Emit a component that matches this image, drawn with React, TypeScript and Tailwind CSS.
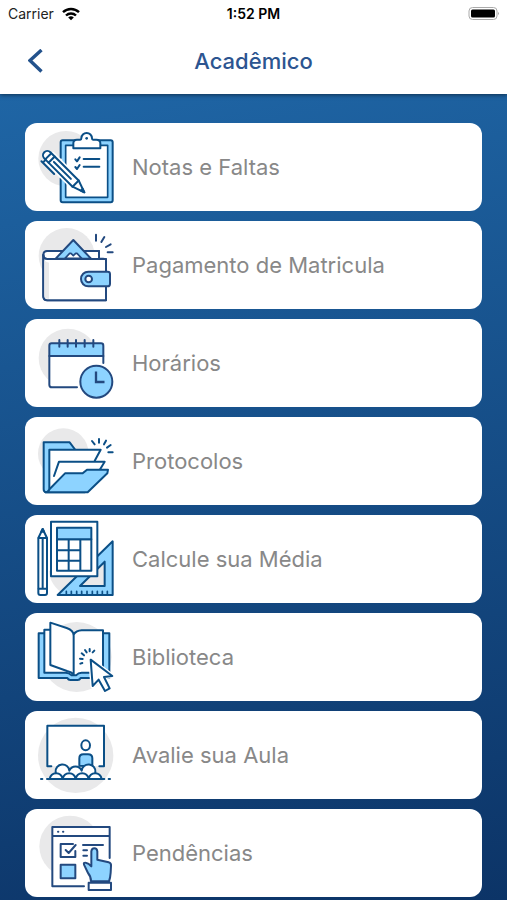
import type { ReactNode } from "react";

const SKY = "#8dd3ff";
const HALO = "#e9e9ea";

type IconProps = { top: number; color?: string; children: ReactNode };

function Illustration({ top, color = "#0b4f86", children }: IconProps) {
  return (
    <svg
      className="h-[88px] w-[92px] shrink-0"
      viewBox={`15 ${top} 276 264`}
      fill="none"
      stroke={color}
      strokeWidth={6}
      strokeLinecap="round"
      strokeLinejoin="round"
      aria-hidden="true"
    >
      {children}
    </svg>
  );
}

function GradesIcon() {
  return (
    <Illustration top={15}>
      <circle cx="138" cy="122" r="83" fill={HALO} stroke="none" />
      <rect x="122" y="67" width="156" height="186" rx="6" fill={SKY} />
      <rect x="137" y="82" width="126" height="156" fill="#fff" strokeWidth="5" />
      <path d="M160 91V76q0-11 11-11h10q3 0 3-4a16 16 0 0 1 32 0q0 4 3 4h10q12 0 12 11v15z" fill="#fff" />
      <circle cx="200" cy="61" r="4" fill="#0b4f86" stroke="none" />
      <path d="M191 123h47M191 146h47M166 124l5 6 8-12M166 147l5 6 8-12" />
      <path d="M122 122v58" stroke={HALO} strokeWidth="9" strokeLinecap="butt" />
      <g transform="translate(82 112) rotate(45)">
        <path d="M10-13h112l35 13-35 13H10z" fill="#fff" stroke="#fff" strokeWidth="16" />
        <path d="M18-13h102l37 13-37 13H18z" fill="#fff" />
        <path d="M18-13H0a13 13 0 0 0 0 26h18z" fill="#fff" />
        <path d="M4-12v24M120-13v26M28 0h72" />
        <path d="M146-4l11 4-11 4z" fill="#0b4f86" />
        <path d="M6 13v12M0 25h54" />
      </g>
    </Illustration>
  );
}

function WalletIcon() {
  return (
    <Illustration top={15} color="#23497f">
      <circle cx="140" cy="120" r="84" fill={HALO} stroke="none" />
      <path d="M70 117q0-12 12-12h155v23h12l9 2v123H82q-12 0-12-12z" fill="#fff" />
      <path d="M82 129q-12 0-12-12M82 105h155v22" />
      <path d="M107 128l53-56 53 56z" fill={SKY} />
      <path d="M135 127l14-15h4l7 7 7-7h4l14 15z" fill="#fff" strokeWidth="5" />
      <path d="M82 129h176v124H82q-12 0-12-12V117q0 12 12 12z" fill="#fff" />
      <path d="M73 133q4 6 14 7v109q-14 0-14-13z" fill={HALO} stroke="none" />
      <path d="M205 167h58q7 0 7 7v29q0 8-7 8h-58a22 22 0 0 1 0-44z" fill={SKY} />
      <circle cx="206" cy="189" r="10" fill="#fff" />
      <path d="M228 56v18M253 63l-9 15M272 85l-14 8M263 109h15" />
    </Illustration>
  );
}

function ScheduleIcon() {
  return (
    <Illustration top={14} color="#23497f">
      <circle cx="144" cy="131" r="88" fill={HALO} stroke="none" />
      <rect x="88" y="88" width="162" height="132" rx="7" fill="#fff" stroke="none" />
      <path d="M88 125V94q0-7 7-7h148q7 0 7 7v31z" fill={SKY} />
      <path d="M88 125v86q0 8 8 8h75M250 125v21" />
      <path d="M118 77v20M143 77v20M168 77v20M194 77v20M220 77v20" />
      <circle cx="229" cy="202" r="48" fill={SKY} />
      <path d="M228 175v28h22" strokeWidth="7" strokeLinecap="square" strokeLinejoin="miter" />
    </Illustration>
  );
}

function FolderIcon() {
  return (
    <Illustration top={14}>
      <circle cx="130" cy="124" r="76" fill={HALO} stroke="none" />
      <path d="M71 90h78l15 20 50 110-20 20H77q-6-2-6-9z" fill={SKY} />
      <path d="M88 228V112h154l-17 32-30 65z" fill="#fff" />
      <path d="M102 191l15-43h137l-24 47-60 30H93l11-32z" fill="#fff" stroke="none" />
      <path d="M102 191l15-43h137l-15 25" />
      <path d="M76 240q8 0 13-10l46-47h53l13-11h63l-2 11-59 57z" fill={SKY} />
      <path d="M216 86l8 10M237 80v11M258 85l-6 11M272 98l-11 8M265 120h13" />
    </Illustration>
  );
}

function CalculatorIcon() {
  return (
    <Illustration top={13}>
      <path d="M87 180q2 45 50 74h40l20-58z" fill={HALO} stroke="none" />
      <path d="M113 253L278 92v161z" fill={SKY} />
      <path d="M180 226l74-73v73z" fill={HALO} />
      <path d="M139 250v-8M154 250v-8M170 250v-8M185 250v-8M201 250v-8M217 250v-8M232 250v-8M247 250v-8M262 250v-8" strokeWidth="5" />
      <rect x="93" y="33" width="139" height="164" fill="#fff" />
      <path d="M111 86h103v94H111zM146 87v93M181 87v93M111 119h70M111 150h70" />
      <path d="M111 51h103v35H111z" fill={SKY} />
      <path d="M55 82l13-27 13 27v165q0 6-6 6H61q-6 0-6-6z" fill="#fff" />
      <path d="M64 63l4-8 4 8z" fill="#0b4f86" />
      <path d="M56 82h24M68 84v148M56 234h24" />
    </Illustration>
  );
}

function LibraryIcon() {
  return (
    <Illustration top={13}>
      <circle cx="170" cy="145" r="105" fill={HALO} stroke="none" />
      <path d="M90 74H56v134h86q3 6 9 6h22q6 0 9-6h86V74z" fill={SKY} />
      <path d="M91 63H73v129h64q10 0 18 8h13q7-8 17-8h64V65h-64q-16 1-24 12z" fill="#fff" />
      <path d="M91 42l49 16q21 7 21 23v117q-6-8-20-11l-50-18z" fill="#fff" />
      <path d="M187 163l-6 2M188 151l-8-1M192 140l-7-6M200 131l-5-7M209 128v-7M218 131l5-5" />
      <path d="M212 153l65 49-25 3 17 34-14 8-19-34-18 19z" fill="#fff" stroke="#fff" strokeWidth="14" />
      <path d="M212 153l65 49-25 3 17 34-14 8-19-34-18 19z" fill="#fff" />
    </Illustration>
  );
}

function ClassroomIcon() {
  return (
    <Illustration top={18}>
      <circle cx="167" cy="151" r="113" fill={HALO} stroke="none" />
      <path d="M82 62h170v122H82z" fill="#fff" stroke="none" />
      <path d="M94 184H82V62h170v122h-14" />
      <path d="M178 182v-22q0-12 12-12h14q13 0 13 12v24z" fill={SKY} />
      <ellipse cx="197" cy="121" rx="13" ry="15" fill="#fff" />
      <path d="M107 201a20 20 0 0 1 41-4 20 20 0 0 1 37 0 20 20 0 0 1 41 4v21H107z" fill="#fff" />
      <path d="M89 222a20 22 0 0 1 39 0 20 22 0 0 1 39 0 20 22 0 0 1 39 0 20 22 0 0 1 39 0z" fill="#fff" />
      <path d="M63 222h4M81 222h172M266 222h4" />
    </Illustration>
  );
}

function PendingIcon() {
  return (
    <Illustration top={18} color="#23497f">
      <circle cx="150" cy="130" r="92" fill={HALO} stroke="none" />
      <path d="M97 72h172v178H97z" fill="#fff" stroke="none" />
      <path d="M269 165V72H97v178h95M98 99h170" />
      <path d="M114 86h1M129 86h1" />
      <path d="M159 123h-37v39h44v-18M137 141l9 9 21-24" />
      <path d="M122 185h44v41h-44z" fill={SKY} />
      <path d="M189 126h60M190 142h11M190 158h11" />
      <path d="M214 190v-45q1-9 9-9t9 9v25l34 8q8 2 7 11l-1 20q-1 15-5 26h-54q0-15-9-25l-12-25q-2-7 5-6 9 1 17 11z" fill={SKY} />
      <path d="M206 239h67v22h-67z" fill="#fff" />
    </Illustration>
  );
}

const items = [
  { label: "Notas e Faltas", Icon: GradesIcon },
  { label: "Pagamento de Matricula", Icon: WalletIcon },
  { label: "Horários", Icon: ScheduleIcon },
  { label: "Protocolos", Icon: FolderIcon },
  { label: "Calcule sua Média", Icon: CalculatorIcon },
  { label: "Biblioteca", Icon: LibraryIcon },
  { label: "Avalie sua Aula", Icon: ClassroomIcon },
  { label: "Pendências", Icon: PendingIcon },
];

function StatusBar() {
  return (
    <div className="grid h-7 grid-cols-3 items-center px-2 text-sm text-[#222]">
      <div className="flex items-center gap-2">
        <span>Carrier</span>
        <svg className="h-3.5 w-[18px]" viewBox="0 0 18 14" fill="none" stroke="#000" strokeWidth="2.4" aria-hidden="true">
          <path d="M1 5.2a11.5 11.5 0 0 1 16 0M4 8.5a7.2 7.2 0 0 1 10 0" />
          <path d="M9 13.2L6.2 10.6a4 4 0 0 1 5.6 0z" fill="#000" stroke="none" />
        </svg>
      </div>
      <span className="text-center text-sm font-semibold text-black">1:52 PM</span>
      <svg className="h-3.5 w-8 justify-self-end" viewBox="0 0 32 14" aria-hidden="true">
        <rect x="2" y="0.5" width="28" height="12" rx="3.5" fill="#fff" stroke="#aaa" />
        <rect x="4" y="2.5" width="24" height="8" rx="1.5" fill="#000" />
        <path d="M31 5q1.5 1.5 0 3z" fill="#888" />
      </svg>
    </div>
  );
}

export default function App() {
  return (
    <div className="flex min-h-screen flex-col bg-linear-[170deg,#1f66a6_8%,#0c3467] font-['Inter','Liberation_Sans',sans-serif]">
      <header className="bg-white shadow-[0_1px_4px_rgba(0,0,0,0.5)]">
        <StatusBar />
        <div className="grid h-[66px] grid-cols-[64px_1fr_64px] items-center">
          <button type="button" aria-label="Voltar" className="flex h-full items-center pl-7">
            <svg className="h-6 w-4" viewBox="0 0 16 24" fill="none" stroke="#23528c" strokeWidth="3.4" aria-hidden="true">
              <path d="M13.5 1L2 11.5l11.5 11" />
            </svg>
          </button>
          <h1 className="text-center text-[22px] font-medium text-[#2c5590]">Acadêmico</h1>
        </div>
      </header>
      <main className="px-[25px] pt-[29px] pb-[3px]">
        <ul className="flex flex-col gap-2.5">
          {items.map(({ label, Icon }) => (
            <li key={label}>
              <button
                type="button"
                className="flex h-[88px] w-full items-center gap-[15px] rounded-xl bg-white text-left text-[22px] text-[#888]"
              >
                <Icon />
                <span>{label}</span>
              </button>
            </li>
          ))}
        </ul>
      </main>
    </div>
  );
}
